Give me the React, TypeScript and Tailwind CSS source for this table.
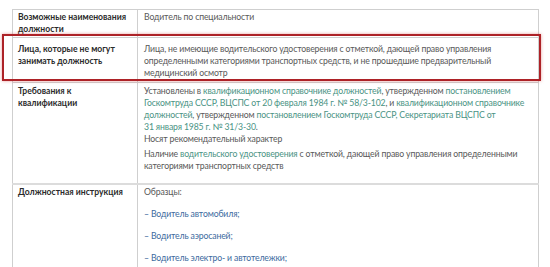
const teal = "text-[#4a9384]";

const Link = ({ children, className = teal }: { children: React.ReactNode; className?: string }) => (
  <span className={className}>{children}</span>
);

const App = () => {
  return (
    <div className="relative w-[550px] h-[267px] overflow-hidden bg-white font-['Lato','Open_Sans',sans-serif] text-[8.7px] leading-[12px] text-[#595959]">
      <div className="pt-[9px] pl-[12px]">
        <table className="w-[526px] border-collapse table-fixed">
          <colgroup>
            <col className="w-[125px]" />
            <col className="w-[401px]" />
          </colgroup>
          <tbody>
            <tr>
              <td className="border border-[#cfcfcf] align-top px-[5px] pt-[1px] pb-[2px] text-[8.6px] font-bold text-[#2b2b2b]">
                Возможные наименования должности
              </td>
              <td className="border border-[#cfcfcf] align-top px-[6px] pt-[1px] pb-[2px] tracking-[-0.15px]">
                Водитель по специальности
              </td>
            </tr>
            <tr>
              <td className="border border-[#cfcfcf] align-top px-[5px] pt-[5px] pb-[3px] text-[8.6px] font-bold text-[#2b2b2b]">
                Лица, которые не могут занимать должность
              </td>
              <td className="border border-[#cfcfcf] align-top px-[6px] pt-[5px] pb-[3px] whitespace-nowrap tracking-[-0.15px]">
                Лица, не имеющие водительского удостоверения с отметкой, дающей право управления
                <br />
                определенными категориями транспортных средств, и не прошедшие предварительный
                <br />
                медицинский осмотр
              </td>
            </tr>
            <tr>
              <td className="border border-[#cfcfcf] border-b-2 border-b-[#dcdcdc] align-top px-[5px] pt-[2px] pb-[11px] text-[8.6px] font-bold text-[#2b2b2b]">
                Требования к квалификации
              </td>
              <td className="border border-[#cfcfcf] border-b-2 border-b-[#dcdcdc] align-top px-[6px] pt-[2px] pb-[11px] whitespace-nowrap tracking-[-0.15px]">
                <p>
                  Установлены в <Link>квалификационном справочнике должностей</Link>, утвержденном{" "}
                  <Link>постановлением</Link>
                  <br />
                  <Link>Госкомтруда СССР, ВЦСПС от 20 февраля 1984 г. № 58/3-102</Link>, и{" "}
                  <Link>квалификационном справочнике</Link>
                  <br />
                  <Link>должностей</Link>, утвержденном{" "}
                  <Link>постановлением Госкомтруда СССР, Секретариата ВЦСПС от</Link>
                  <br />
                  <Link>31 января 1985 г. № 31/3-30</Link>.
                  <br />
                  Носят рекомендательный характер
                </p>
                <p className="mt-[3px]">
                  Наличие <Link>водительского удостоверения</Link> с отметкой, дающей право управления
                  определенными
                  <br />
                  категориями транспортных средств
                </p>
              </td>
            </tr>
            <tr>
              <td className="border border-[#cfcfcf] align-top px-[5px] pt-[1px] pb-[10px] text-[8.6px] font-bold text-[#2b2b2b]">
                Должностная инструкция
              </td>
              <td className="border border-[#cfcfcf] align-top px-[6px] pt-[1px] pb-[10px] tracking-[-0.15px]">
                <div className="flex flex-col gap-[10px]">
                  <p>Образцы:</p>
                  <p>
                    <Link className="text-[#3c6a9e]">– Водитель автомобиля;</Link>
                  </p>
                  <p>
                    <Link className="text-[#3c6a9e]">– Водитель аэросаней;</Link>
                  </p>
                  <p>
                    <Link className="text-[#3c6a9e]">– Водитель электро- и автотележки;</Link>
                  </p>
                </div>
              </td>
            </tr>
          </tbody>
        </table>
      </div>
      {/* highlight frame over the second row */}
      <div className="absolute left-[2px] top-[34px] w-[539px] h-[47px] border-2 border-[#ad2227] shadow-[0_0_3px_rgba(210,60,60,0.5)] pointer-events-none" />
    </div>
  );
};

export default App;
